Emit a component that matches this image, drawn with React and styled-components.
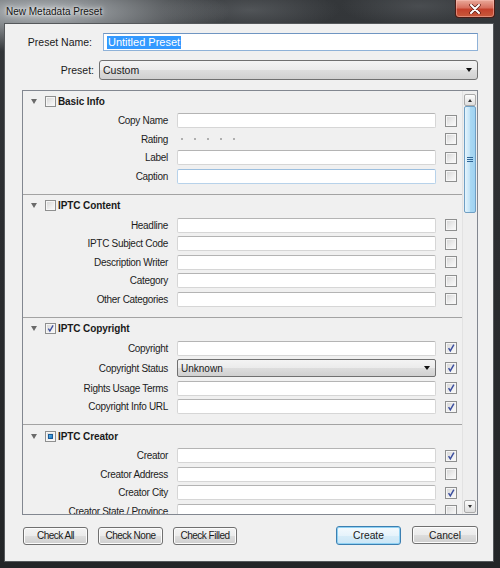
import React from "react";
import styled, { createGlobalStyle, css } from "styled-components";

const GlobalStyle = createGlobalStyle`
  html, body {
    margin: 0;
    padding: 0;
    background: #2a2c2f;
  }
  body {
    font-family: "Liberation Sans", Arial, sans-serif;
    color: #1a1a1a;
  }
`;

// window chrome
const Window = styled.div`
  width: 500px;
  height: 568px;
  box-sizing: border-box;
  display: flex;
  flex-direction: column;
  padding: 0 6px 6px 4px;
  background:
    radial-gradient(ellipse 190px 40px at 40px 12px, rgba(196, 201, 205, 0.9), rgba(196, 201, 205, 0) 100%),
    radial-gradient(ellipse 90px 22px at 250px 10px, rgba(110, 114, 118, 0.5), rgba(110, 114, 118, 0) 100%),
    radial-gradient(ellipse 80px 20px at 420px 6px, rgba(95, 99, 103, 0.5), rgba(95, 99, 103, 0) 100%),
    linear-gradient(180deg, #34373a 0%, #2b2d30 40%, #232527 100%);
`;

const TitleBar = styled.div`
  height: 23px;
  flex: none;
  display: flex;
  justify-content: space-between;
  align-items: flex-start;
  margin-right: -1px;
`;

const Title = styled.div`
  font-size: 10px;
  line-height: 23px;
  padding-left: 2px;
  color: #151515;
  text-shadow: 0 0 6px rgba(255, 255, 255, 0.95), 0 0 3px rgba(255, 255, 255, 0.9);
`;

const CloseButton = styled.div`
  width: 40px;
  height: 18px;
  box-sizing: border-box;
  display: flex;
  align-items: center;
  justify-content: center;
  border: 1px solid #4a1c16;
  border-top: none;
  border-radius: 0 0 4px 4px;
  background: linear-gradient(180deg, #e9a99a 0%, #d7705f 45%, #c4412c 55%, #c85a3c 100%);
  box-shadow: inset 0 0 0 1px rgba(255, 200, 190, 0.45);
`;

const Client = styled.div`
  flex: 1;
  display: flex;
  flex-direction: column;
  background: #f0f0f0;
  border: 1px solid #55585b;
  padding: 9px 15px 17px 17px;
  min-height: 0;
`;

// top fields
const TopRow = styled.div`
  display: flex;
  align-items: center;
  height: ${(p) => p.$height}px;
  flex: none;
  margin-top: ${(p) => p.$top || 0}px;
`;

const TopLabel = styled.div`
  width: ${(p) => p.$width}px;
  margin-right: ${(p) => p.$gap}px;
  text-align: right;
  font-size: 10.5px;
  white-space: nowrap;
`;

const NameInput = styled.div`
  flex: 1;
  height: 18px;
  box-sizing: border-box;
  display: flex;
  align-items: center;
  padding-left: 3px;
  background: #fff;
  border: 1px solid #8fb2d8;
  border-top-color: #6f95c2;
  font-size: 11px;
`;

const Selected = styled.span`
  background: #3399ff;
  color: #fff;
  line-height: 13px;
  padding: 0 1px;
`;

const DropDown = styled.div`
  flex: 1;
  height: ${(p) => p.$height}px;
  box-sizing: border-box;
  display: flex;
  align-items: center;
  justify-content: space-between;
  padding: 0 ${(p) => p.$padRight}px 0 3px;
  border: 1px solid #707070;
  border-radius: ${(p) => p.$radius}px;
  background: linear-gradient(180deg, #f4f4f4 0%, #ebebeb 50%, #dddddd 51%, #d0d0d0 100%);
  font-size: ${(p) => p.$font}px;
`;

const DropArrow = styled.span`
  width: 0;
  height: 0;
  border-left: 3px solid transparent;
  border-right: 3px solid transparent;
  border-top: 4px solid #111;
`;

// metadata panel
const Panel = styled.div`
  flex: none;
  height: 425px;
  box-sizing: border-box;
  margin-top: 10px;
  display: flex;
  border: 1px solid #828790;
  background: #f0f0f0;
`;

const ScrollArea = styled.div`
  flex: 1;
  overflow: hidden;
`;

const Section = styled.div`
  border-top: 1px solid #a3a3a3;
  padding: 4px 0 10px;

  &:first-child {
    border-top: none;
    padding-top: 3px;
  }
`;

const SectionHeader = styled.div`
  height: 14px;
  display: flex;
  align-items: center;
  padding-left: 8px;
`;

const Disclosure = styled.span`
  width: 0;
  height: 0;
  border-left: 3px solid transparent;
  border-right: 3px solid transparent;
  border-top: 5px solid #6a6a6a;
  margin-right: 8px;
`;

const SectionTitle = styled.span`
  font-size: 10px;
  font-weight: bold;
  letter-spacing: -0.1px;
  margin-left: 2px;
`;

const Rows = styled.div`
  display: flex;
  flex-direction: column;
  gap: 3.5px;
  margin-top: 5px;
`;

const FieldRow = styled.div`
  display: grid;
  grid-template-columns: 145px 259px 12px;
  column-gap: 9px;
  align-items: center;
  height: ${(p) => p.$height}px;
`;

const FieldLabel = styled.div`
  text-align: right;
  font-size: 10px;
  letter-spacing: -0.3px;
  white-space: nowrap;
  color: #1c1c1c;
`;

const TextField = styled.div`
  height: 15px;
  box-sizing: border-box;
  background: #fff;
  border: 1px solid #d6d6d6;
  border-top-color: #b4b4b4;
  border-radius: 2px;
  ${(p) =>
    p.$focused &&
    css`
      border-color: #b7d2ea;
      border-top-color: #9cbfdf;
    `}
`;

const RatingDots = styled.div`
  display: flex;
  gap: 11px;
  padding-left: 4px;
`;

const Dot = styled.span`
  width: 2px;
  height: 2px;
  border-radius: 50%;
  background: #9a9a9a;
`;

const Box = styled.span`
  position: relative;
  width: ${(p) => p.$size}px;
  height: ${(p) => p.$size}px;
  box-sizing: border-box;
  flex: none;
  display: flex;
  align-items: center;
  justify-content: center;
  border: 1px solid #8e8f8f;
  background: linear-gradient(135deg, #d4d4d4 0%, #eeeeee 60%, #fbfbfb 100%);
  box-shadow: inset 0 0 0 1px #f6f6f6;
`;

const MixedFill = styled.span`
  position: absolute;
  inset: 2px;
  border: 1px solid #1b5b98;
  background: linear-gradient(135deg, #59b3ea 0%, #1f7ac4 100%);
`;

// scrollbar
const ScrollBar = styled.div`
  width: 15px;
  flex: none;
  display: flex;
  flex-direction: column;
  align-items: center;
  padding: 3px 0 1px;
  box-sizing: border-box;
  background: #eeeeee;
  border-left: 1px solid #e2e2e2;
`;

const ScrollButton = styled.div`
  width: 12px;
  height: ${(p) => p.$height}px;
  box-sizing: border-box;
  display: flex;
  align-items: center;
  justify-content: center;
  border: 1px solid #a9a9a9;
  border-radius: 2px;
  background: linear-gradient(180deg, #fcfcfc 0%, #ececec 50%, #dedede 100%);
`;

const TinyArrow = styled.span`
  width: 0;
  height: 0;
  border-left: 2px solid transparent;
  border-right: 2px solid transparent;
  ${(p) =>
    p.$up
      ? css`border-bottom: 3px solid #333;`
      : css`border-top: 3px solid #333;`}
`;

const Thumb = styled.div`
  width: 12px;
  height: 107px;
  box-sizing: border-box;
  display: flex;
  flex-direction: column;
  align-items: center;
  justify-content: center;
  gap: 1px;
  border: 1px solid #6f9fc4;
  border-radius: 2px;
  background: linear-gradient(90deg, #e6f4fc 0%, #c4e5f8 45%, #a9d8f3 55%, #9fd2f1 100%);
`;

const GripLine = styled.span`
  width: 6px;
  height: 1px;
  background: #2f6596;
`;

const Spacer = styled.div`
  flex: 1;
`;

// footer buttons
const ButtonRow = styled.div`
  flex: none;
  display: flex;
  align-items: center;
  height: 19px;
  margin-top: 11px;
  padding-left: 1px;
`;

const ButtonGroup = styled.div`
  display: flex;
  gap: ${(p) => p.$gap}px;
  margin-left: ${(p) => (p.$right ? "auto" : "0")};
`;

const Button = styled.div`
  width: ${(p) => p.$width || 65}px;
  height: ${(p) => (p.$primary ? 19 : 18)}px;
  box-sizing: border-box;
  display: flex;
  align-items: center;
  justify-content: center;
  border: 1px solid #707070;
  border-radius: 3px;
  background: linear-gradient(180deg, #f3f3f3 0%, #ebebeb 50%, #dddddd 51%, #cfcfcf 100%);
  box-shadow: inset 0 0 0 1px #fcfcfc;
  font-size: ${(p) => (p.$compact ? 10 : 10.3)}px;
  letter-spacing: ${(p) => (p.$compact ? -0.5 : 0)}px;
  white-space: nowrap;
  ${(p) =>
    p.$primary &&
    css`
      border-color: #3c7fb1;
      background: linear-gradient(180deg, #f4fafe 0%, #e6f3fb 50%, #d7ecf8 51%, #cbe6f6 100%);
      box-shadow: inset 0 0 0 1px #8fd1f3;
    `}
`;

const Checkbox = ({ size = 12, state = "off" }) => (
  <Box $size={size}>
    {state === "on" && (
      <svg width={size - 2} height={size - 2} viewBox="0 0 10 10">
        <path d="M2.6 5.2 L4.3 7.8 L7.9 1.6" fill="none" stroke="#3c4f9f" strokeWidth="1.5" />
      </svg>
    )}
    {state === "mixed" && <MixedFill />}
  </Box>
);

const sections = [
  {
    title: "Basic Info",
    state: "off",
    rows: [
      { label: "Copy Name" },
      { label: "Rating", kind: "rating" },
      { label: "Label" },
      { label: "Caption", focused: true },
    ],
  },
  {
    title: "IPTC Content",
    state: "off",
    rows: [
      { label: "Headline" },
      { label: "IPTC Subject Code" },
      { label: "Description Writer" },
      { label: "Category" },
      { label: "Other Categories" },
    ],
  },
  {
    title: "IPTC Copyright",
    state: "on",
    rows: [
      { label: "Copyright", checked: true },
      { label: "Copyright Status", kind: "select", value: "Unknown", checked: true },
      { label: "Rights Usage Terms", checked: true },
      { label: "Copyright Info URL", checked: true },
    ],
  },
  {
    title: "IPTC Creator",
    state: "mixed",
    rows: [
      { label: "Creator", checked: true },
      { label: "Creator Address" },
      { label: "Creator City", checked: true },
      { label: "Creator State / Province" },
    ],
  },
];

const renderValue = (row) => {
  if (row.kind === "rating") {
    return (
      <RatingDots>
        {[0, 1, 2, 3, 4].map((i) => (
          <Dot key={i} />
        ))}
      </RatingDots>
    );
  }
  if (row.kind === "select") {
    return (
      <DropDown $height={18} $radius={2} $padRight={5} $font={10}>
        <span>{row.value}</span>
        <DropArrow />
      </DropDown>
    );
  }
  return <TextField $focused={row.focused} />;
};

export default function App() {
  return (
    <>
      <GlobalStyle />
      <Window>
        <TitleBar>
          <Title>New Metadata Preset</Title>
          <CloseButton>
            <svg width="12" height="10" viewBox="0 0 12 10">
              <path d="M2 1 L10 9 M10 1 L2 9" stroke="#5a1a12" strokeWidth="3.4" strokeLinecap="round" />
              <path d="M2 1 L10 9 M10 1 L2 9" stroke="#ffffff" strokeWidth="2" strokeLinecap="round" />
            </svg>
          </CloseButton>
        </TitleBar>

        <Client>
          <TopRow $height={18}>
            <TopLabel $width={70} $gap={11}>Preset Name:</TopLabel>
            <NameInput>
              <Selected>Untitled Preset</Selected>
            </NameInput>
          </TopRow>
          <TopRow $height={20} $top={9}>
            <TopLabel $width={72} $gap={5}>Preset:</TopLabel>
            <DropDown $height={20} $radius={3} $padRight={5} $font={10.5}>
              <span>Custom</span>
              <DropArrow />
            </DropDown>
          </TopRow>

          <Panel>
            <ScrollArea>
              {sections.map((s) => (
                <Section key={s.title}>
                  <SectionHeader>
                    <Disclosure />
                    <Checkbox size={11} state={s.state} />
                    <SectionTitle>{s.title}</SectionTitle>
                  </SectionHeader>
                  <Rows>
                    {s.rows.map((r) => (
                      <FieldRow key={r.label} $height={r.kind === "select" ? 18 : 15}>
                        <FieldLabel>{r.label}</FieldLabel>
                        {renderValue(r)}
                        <Checkbox state={r.checked ? "on" : "off"} />
                      </FieldRow>
                    ))}
                  </Rows>
                </Section>
              ))}
            </ScrollArea>
            <ScrollBar>
              <ScrollButton $height={12}>
                <TinyArrow $up />
              </ScrollButton>
              <Thumb>
                <GripLine />
                <GripLine />
                <GripLine />
              </Thumb>
              <Spacer />
              <ScrollButton $height={13}>
                <TinyArrow />
              </ScrollButton>
            </ScrollBar>
          </Panel>

          <ButtonRow>
            <ButtonGroup $gap={10}>
              <Button $compact>Check All</Button>
              <Button $compact>Check None</Button>
              <Button $compact $width={64}>Check Filled</Button>
            </ButtonGroup>
            <ButtonGroup $right $gap={11}>
              <Button $primary>Create</Button>
              <Button $width={66}>Cancel</Button>
            </ButtonGroup>
          </ButtonRow>
        </Client>
      </Window>
    </>
  );
}
